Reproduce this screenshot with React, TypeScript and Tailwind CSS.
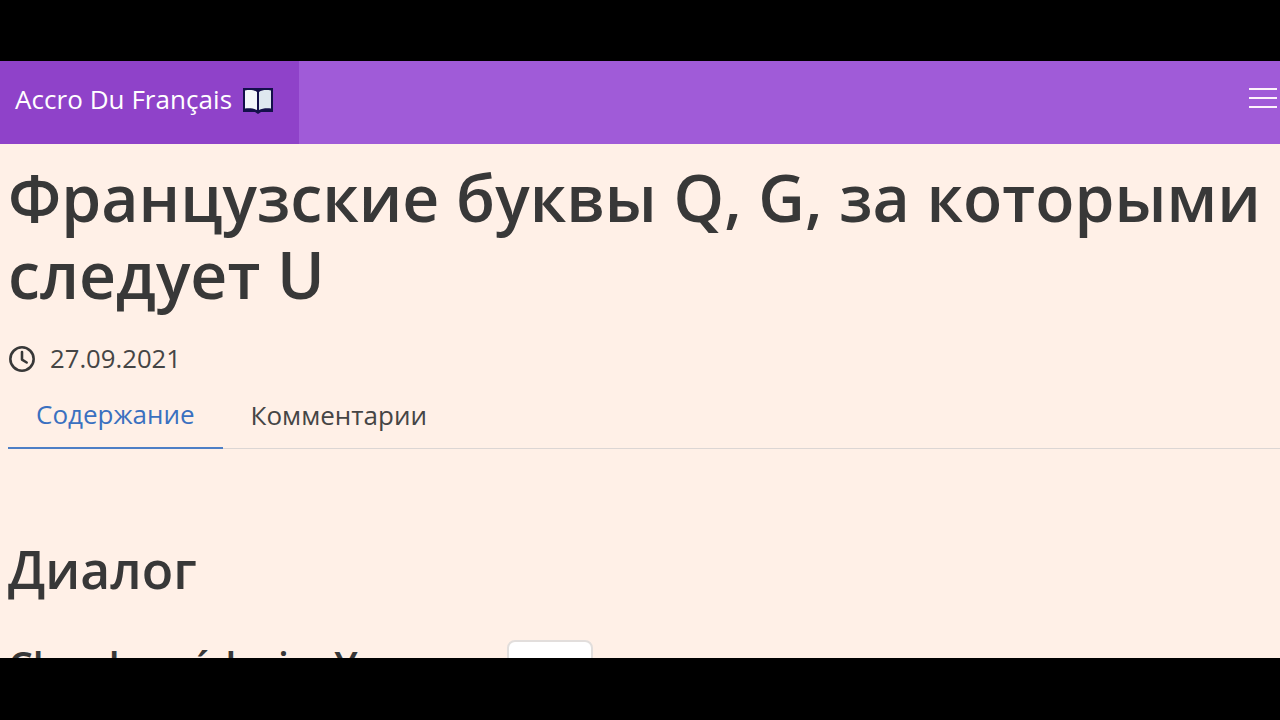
export default function App() {
  return (
    <div className="w-[1280px] h-[720px] bg-black overflow-hidden flex flex-col pt-[61px] pb-[62px] font-['Open_Sans',sans-serif]">
      <div className="flex-1 bg-[#fff0e7] overflow-hidden text-[#383838]">
        {/* Navbar */}
        <nav className="h-[83px] bg-[#a05bd8] flex items-center justify-between">
          <div className="w-[299px] h-full bg-[#8f42c9] flex items-center pl-[15px] pb-[6px] gap-[10px]">
            <span className="text-white text-[26px] tracking-[0.05px]">Accro Du Français</span>
            <svg className="w-[32px] h-[28px] mt-[2px]" viewBox="0 0 32 28">
              <path d="M1 1h30v24H19l-3 2-3-2H1z" fill="#14104a" />
              <path d="M3 3.500c5-1 9-.5 12 1.500v18c-3-1.500-7-2-12-1.500z" fill="#f4f7fa" />
              <path d="M29 3.500c-5-1-9-.5-12 1.500v18c3-1.500 7-2 12-1.500z" fill="#dfe8ef" />
            </svg>
          </div>
          <div className="w-[28px] mr-[3px] mb-[9px] flex flex-col gap-[7px]">
            <div className="h-[2px] bg-[#fdf3fb]" />
            <div className="h-[2px] bg-[#fdf3fb]" />
            <div className="h-[2px] bg-[#fdf3fb]" />
          </div>
        </nav>

        <div className="pl-[8px]">
          <h1 className="mt-[15px] text-[64.3px] leading-[77px] font-semibold whitespace-nowrap">
            Французские буквы Q, G, за которыми
            <br />
            следует U
          </h1>

          {/* Date */}
          <div className="mt-[26px] flex items-center gap-[14px] h-[40px]">
            <svg className="w-[28px] h-[28px]" viewBox="0 0 24 24" fill="none" stroke="#383838" strokeWidth="2.200" strokeLinecap="round" strokeLinejoin="round">
              <circle cx="12" cy="12" r="10" />
              <path d="M12 6v6.500l4 2.500" />
            </svg>
            <span className="text-[25.7px] text-[#454545]">27.09.2021</span>
          </div>

          {/* Tabs */}
          <div className="mt-[8px] flex border-b border-[#dcd6d4] h-[62px] text-[26px]">
            <div className="h-[62px] px-[28px] pb-[6px] flex items-center text-[#3a70c0] border-b-2 border-[#4d7fc6]">Содержание</div>
            <div className="h-[62px] px-[28px] pb-[6px] flex items-center text-[#454545]">Комментарии</div>
          </div>

          <h2 className="mt-[89px] text-[51.6px] leading-[62px] font-semibold">Диалог</h2>

          <div className="mt-[40px] flex items-start gap-[22px] h-[40px]">
            <span className="mt-[3px] text-[39px] leading-[46px] font-semibold">Chez le médecin. Yeux ou</span>
            <div className="w-[86px] h-[60px] bg-white border-2 border-[#e2dedc] rounded-[8px]" />
          </div>
        </div>
      </div>
    </div>
  );
}
